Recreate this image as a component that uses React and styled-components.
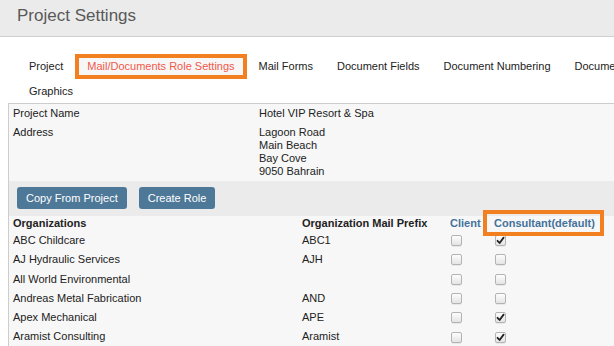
import React from "react";
import styled, { createGlobalStyle } from "styled-components";

const tabs = [
  "Project",
  "Mail/Documents Role Settings",
  "Mail Forms",
  "Document Fields",
  "Document Numbering",
  "Document Types",
  "Graphics",
];

const orgs = [
  { name: "ABC Childcare", prefix: "ABC1", client: false, consultant: true },
  { name: "AJ Hydraulic Services", prefix: "AJH", client: false, consultant: false },
  { name: "All World Environmental", prefix: "", client: false, consultant: false },
  { name: "Andreas Metal Fabrication", prefix: "AND", client: false, consultant: false },
  { name: "Apex Mechanical", prefix: "APE", client: false, consultant: true },
  { name: "Aramist Consulting", prefix: "Aramist", client: false, consultant: true },
];

function Check({ checked }) {
  return (
    <Box>
      {checked && (
        <svg width="9" height="9" viewBox="0 0 9 9">
          <path
            d="M1.5 4.8 L3.6 7 L7.6 1.6"
            fill="none"
            stroke="#222"
            strokeWidth="1.8"
            strokeLinecap="round"
            strokeLinejoin="round"
          />
        </svg>
      )}
    </Box>
  );
}

export default function App() {
  return (
    <>
      <GlobalStyle />
      <Page>
        <Header>
          <Title>Project Settings</Title>
        </Header>
        <TabBar>
          {tabs.map((t, i) => (
            <Tab key={t} $active={i === 1}>
              {t}
            </Tab>
          ))}
        </TabBar>
        <Panel>
          <InfoGrid>
            <InfoCell>Project Name</InfoCell>
            <InfoCell>Hotel VIP Resort &amp; Spa</InfoCell>
            <InfoCell>Address</InfoCell>
            <InfoCell>
              Lagoon Road
              <br />
              Main Beach
              <br />
              Bay Cove
              <br />
              9050 Bahrain
            </InfoCell>
          </InfoGrid>
          <ActionBar>
            <Button>Copy From Project</Button>
            <Button>Create Role</Button>
          </ActionBar>
          <HeadRow>
            <HeadCell>Organizations</HeadCell>
            <HeadCell>Organization Mail Prefix</HeadCell>
            <HeadCell $blue>Client</HeadCell>
            <HeadCell $blue $marked>
              Consultant(default)
            </HeadCell>
          </HeadRow>
          {orgs.map((o) => (
            <Row key={o.name}>
              <Cell>{o.name}</Cell>
              <Cell>{o.prefix}</Cell>
              <Cell>
                <Check checked={o.client} />
              </Cell>
              <Cell>
                <Check checked={o.consultant} />
              </Cell>
            </Row>
          ))}
        </Panel>
      </Page>
    </>
  );
}

const GlobalStyle = createGlobalStyle`
  body {
    margin: 0;
    overflow: hidden;
    background: #fff;
    font-family: "Liberation Sans", Arial, sans-serif;
    font-size: 11px;
    color: #222;
  }
`;

const Page = styled.div`
  width: 720px;
`;

const Header = styled.div`
  height: 37px;
  background: #ebebeb;
  border-bottom: 1px solid #cfcfcf;
  display: flex;
  align-items: center;
  padding: 0 0 4px 17px;
  box-sizing: border-box;
`;

const Title = styled.h1`
  margin: 0;
  font-size: 17px;
  font-weight: normal;
  color: #595959;
`;

const TabBar = styled.div`
  display: flex;
  flex-wrap: wrap;
  padding: 17px 0 0 17px;
`;

const Tab = styled.div`
  height: 25px;
  box-sizing: border-box;
  line-height: ${(p) => (p.$active ? "17px" : "25px")};
  padding: 0 ${(p) => (p.$active ? "8px" : "12px")};
  border: ${(p) => (p.$active ? "4px solid #f28021" : "none")};
  background: ${(p) => (p.$active ? "#f7f7f7" : "transparent")};
  color: ${(p) => (p.$active ? "#f2584a" : "#222")};
  white-space: nowrap;
`;

const Panel = styled.div`
  margin: -1px 0 0 8px;
  border-top: 1px solid #cdcdcd;
  border-left: 1px solid #cdcdcd;
  background: #f7f7f7;
`;

const InfoGrid = styled.div`
  display: grid;
  grid-template-columns: 246px 1fr;
`;

const InfoCell = styled.div`
  padding: 3px 4px;
  line-height: 13px;
`;

const ActionBar = styled.div`
  display: flex;
  gap: 12px;
  padding: 6px 8px 7px;
  background: #ebebeb;
`;

const Button = styled.button`
  height: 22px;
  padding: 0 9px;
  border: none;
  border-radius: 3px;
  background: #4e7898;
  color: #fff;
  font-family: inherit;
  font-size: 11px;
`;

const Row = styled.div`
  display: grid;
  grid-template-columns: 289px 148px 44px 1fr;
`;

const HeadRow = styled(Row)`
  font-weight: bold;
`;

const HeadCell = styled.div`
  position: relative;
  padding: 1px 4px 1px;
  line-height: 13px;
  color: ${(p) => (p.$blue ? "#44729b" : "#222")};

  ${(p) =>
    p.$marked &&
    `
    &::after {
      content: "";
      position: absolute;
      left: -7px;
      top: -6px;
      width: 121px;
      height: 26px;
      box-sizing: border-box;
      border: 4px solid #f28021;
    }
  `}
`;

const Cell = styled.div`
  display: flex;
  align-items: center;
  padding: 3px 4px;
  line-height: 13.3px;
  min-height: 13.3px;
`;

const Box = styled.span`
  display: inline-flex;
  align-items: center;
  justify-content: center;
  width: 11px;
  height: 11px;
  margin-left: 1px;
  box-sizing: border-box;
  border: 1px solid #b3b3b3;
  border-radius: 2px;
  background: linear-gradient(#fdfdfd, #e4e4e4);
  box-shadow: 0 1px 0 rgba(0, 0, 0, 0.06);
`;
